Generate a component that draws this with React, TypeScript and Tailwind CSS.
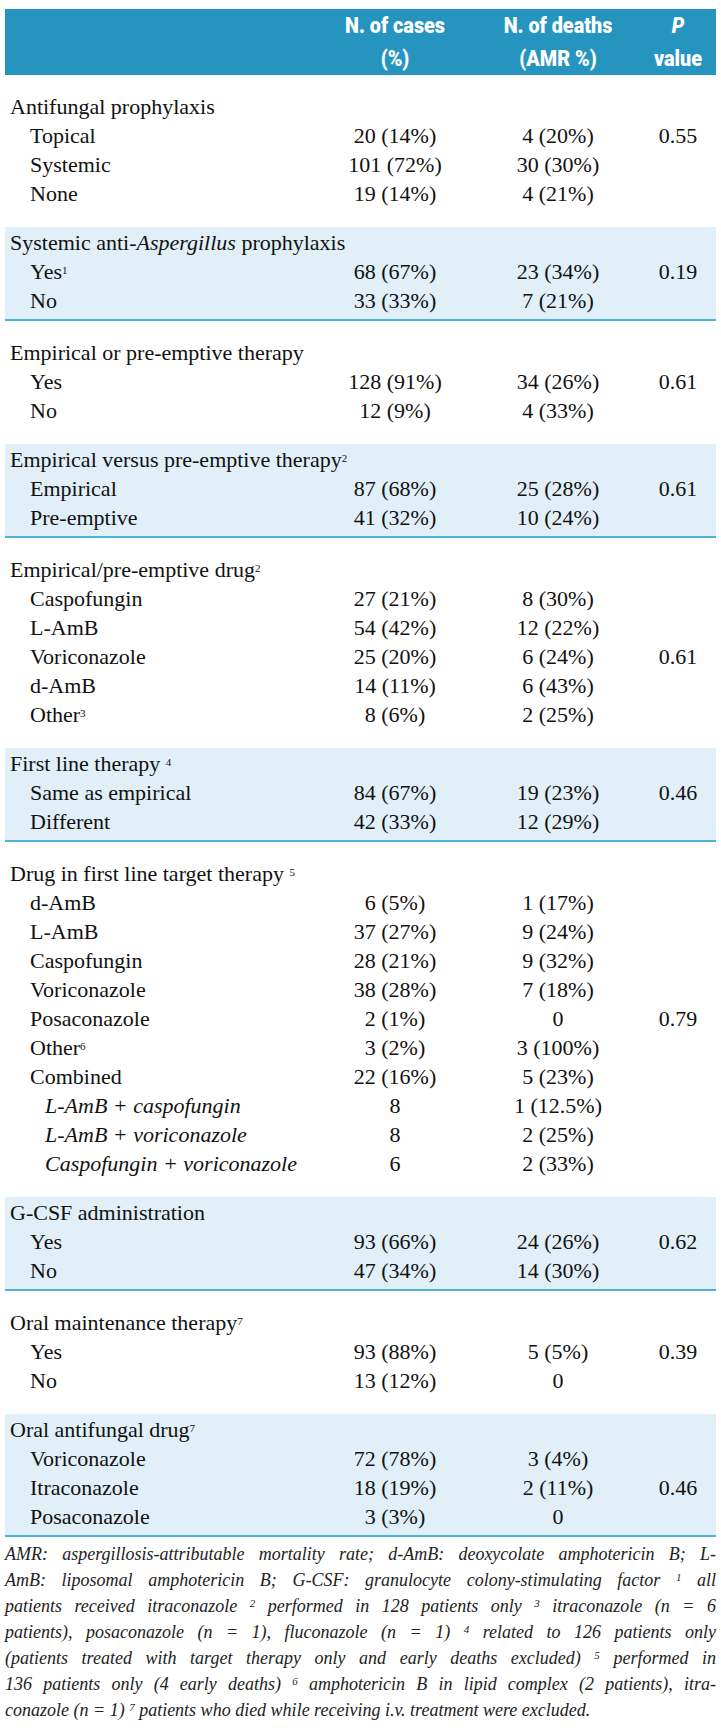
import type { ReactNode } from 'react';

interface Row {
  label: ReactNode;
  cases: string;
  deaths: string;
  p?: string;
  sub?: boolean;
}

interface Section {
  title: ReactNode;
  band?: boolean;
  rows: Row[];
}

// preflight already lifts <sup> by half its size
const Sup = ({ children }: { children: ReactNode }) => <sup className="text-[11px]">{children}</sup>;

const sections: Section[] = [
  {
    title: 'Antifungal prophylaxis',
    rows: [
      { label: 'Topical', cases: '20 (14%)', deaths: '4 (20%)', p: '0.55' },
      { label: 'Systemic', cases: '101 (72%)', deaths: '30 (30%)' },
      { label: 'None', cases: '19 (14%)', deaths: '4 (21%)' },
    ],
  },
  {
    title: (
      <>
        Systemic anti-<i>Aspergillus</i> prophylaxis
      </>
    ),
    band: true,
    rows: [
      { label: <>Yes<Sup>1</Sup></>, cases: '68 (67%)', deaths: '23 (34%)', p: '0.19' },
      { label: 'No', cases: '33 (33%)', deaths: '7 (21%)' },
    ],
  },
  {
    title: 'Empirical or pre-emptive therapy',
    rows: [
      { label: 'Yes', cases: '128 (91%)', deaths: '34 (26%)', p: '0.61' },
      { label: 'No', cases: '12 (9%)', deaths: '4 (33%)' },
    ],
  },
  {
    title: <>Empirical versus pre-emptive therapy<Sup>2</Sup></>,
    band: true,
    rows: [
      { label: 'Empirical', cases: '87 (68%)', deaths: '25 (28%)', p: '0.61' },
      { label: 'Pre-emptive', cases: '41 (32%)', deaths: '10 (24%)' },
    ],
  },
  {
    title: <>Empirical/pre-emptive drug<Sup>2</Sup></>,
    rows: [
      { label: 'Caspofungin', cases: '27 (21%)', deaths: '8 (30%)' },
      { label: 'L-AmB', cases: '54 (42%)', deaths: '12 (22%)' },
      { label: 'Voriconazole', cases: '25 (20%)', deaths: '6 (24%)', p: '0.61' },
      { label: 'd-AmB', cases: '14 (11%)', deaths: '6 (43%)' },
      { label: <>Other<Sup>3</Sup></>, cases: '8 (6%)', deaths: '2 (25%)' },
    ],
  },
  {
    title: <>First line therapy <Sup>4</Sup></>,
    band: true,
    rows: [
      { label: 'Same as empirical', cases: '84 (67%)', deaths: '19 (23%)', p: '0.46' },
      { label: 'Different', cases: '42 (33%)', deaths: '12 (29%)' },
    ],
  },
  {
    title: <>Drug in first line target therapy <Sup>5</Sup></>,
    rows: [
      { label: 'd-AmB', cases: '6 (5%)', deaths: '1 (17%)' },
      { label: 'L-AmB', cases: '37 (27%)', deaths: '9 (24%)' },
      { label: 'Caspofungin', cases: '28 (21%)', deaths: '9 (32%)' },
      { label: 'Voriconazole', cases: '38 (28%)', deaths: '7 (18%)' },
      { label: 'Posaconazole', cases: '2 (1%)', deaths: '0', p: '0.79' },
      { label: <>Other<Sup>6</Sup></>, cases: '3 (2%)', deaths: '3 (100%)' },
      { label: 'Combined', cases: '22 (16%)', deaths: '5 (23%)' },
      { label: 'L-AmB + caspofungin', cases: '8', deaths: '1 (12.5%)', sub: true },
      { label: 'L-AmB + voriconazole', cases: '8', deaths: '2 (25%)', sub: true },
      { label: 'Caspofungin + voriconazole', cases: '6', deaths: '2 (33%)', sub: true },
    ],
  },
  {
    title: 'G-CSF administration',
    band: true,
    rows: [
      { label: 'Yes', cases: '93 (66%)', deaths: '24 (26%)', p: '0.62' },
      { label: 'No', cases: '47 (34%)', deaths: '14 (30%)' },
    ],
  },
  {
    title: <>Oral maintenance therapy<Sup>7</Sup></>,
    rows: [
      { label: 'Yes', cases: '93 (88%)', deaths: '5 (5%)', p: '0.39' },
      { label: 'No', cases: '13 (12%)', deaths: '0' },
    ],
  },
  {
    title: <>Oral antifungal drug<Sup>7</Sup></>,
    band: true,
    rows: [
      { label: 'Voriconazole', cases: '72 (78%)', deaths: '3 (4%)' },
      { label: 'Itraconazole', cases: '18 (19%)', deaths: '2 (11%)', p: '0.46' },
      { label: 'Posaconazole', cases: '3 (3%)', deaths: '0' },
    ],
  },
];

const footnote: ReactNode[] = [
  <>AMR: aspergillosis-attributable mortality rate; d-AmB: deoxycolate amphotericin B; L-</>,
  <>AmB: liposomal amphotericin B; G-CSF: granulocyte colony-stimulating factor <Sup>1</Sup> all</>,
  <>patients received itraconazole <Sup>2</Sup> performed in 128 patients only <Sup>3</Sup> itraconazole (n = 6</>,
  <>patients), posaconazole (n = 1), fluconazole (n = 1) <Sup>4</Sup> related to 126 patients only</>,
  <>(patients treated with target therapy only and early deaths excluded) <Sup>5</Sup> performed in</>,
  <>136 patients only (4 early deaths) <Sup>6</Sup> amphotericin B in lipid complex (2 patients), itra-</>,
  <>conazole (n = 1) <Sup>7</Sup> patients who died while receiving i.v. treatment were excluded.</>,
];

const grid = 'grid grid-cols-[320px_140px_186px_54px]';

function SectionBlock({ section }: { section: Section }) {
  return (
    <div
      className={
        section.band
          ? 'bg-[#e0eff8] pt-[1px] pb-[4px] border-b-2 border-[#4fb1d8]'
          : 'pt-[17px] pb-[19px]'
      }
    >
      <div className="h-[29px] leading-[29px] pl-[5px] whitespace-nowrap">{section.title}</div>
      {section.rows.map((row, i) => (
        <div key={i} className={`${grid} h-[29px] leading-[29px]`}>
          <div className={row.sub ? 'pl-[40px] italic whitespace-nowrap' : 'pl-[25px] whitespace-nowrap'}>
            {row.label}
          </div>
          <div className="text-center">{row.cases}</div>
          <div className="text-center">{row.deaths}</div>
          <div className="text-center">{row.p}</div>
        </div>
      ))}
    </div>
  );
}

export default function App() {
  return (
    <div className="bg-white min-h-[1728px] px-[5px] pt-[9px] text-[#111] font-[family-name:'Liberation_Serif',serif] text-[22px]">
      <div className="w-[711px]">
        <div
          className={`${grid} bg-[#2595c0] h-[66px] text-white font-black text-[22px] leading-[33px] font-[family-name:Roboto,'Liberation_Sans',sans-serif]`}
        >
          <div />
          <div className="text-center scale-x-[0.9]">
            N. of cases
            <br />
            (%)
          </div>
          <div className="text-center scale-x-[0.9]">
            N. of deaths
            <br />
            (AMR %)
          </div>
          <div className="text-center scale-x-[0.9]">
            <i>P</i>
            <br />
            value
          </div>
        </div>

        {sections.map((s, i) => (
          <SectionBlock key={i} section={s} />
        ))}

        <div className="pt-[4px] italic text-[18px] leading-[26px] text-[#222]">
          {footnote.map((line, i) => (
            <div
              key={i}
              className={
                i < footnote.length - 1
                  ? 'text-justify [text-align-last:justify] whitespace-nowrap'
                  : 'whitespace-nowrap'
              }
            >
              {line}
            </div>
          ))}
        </div>
      </div>
    </div>
  );
}
